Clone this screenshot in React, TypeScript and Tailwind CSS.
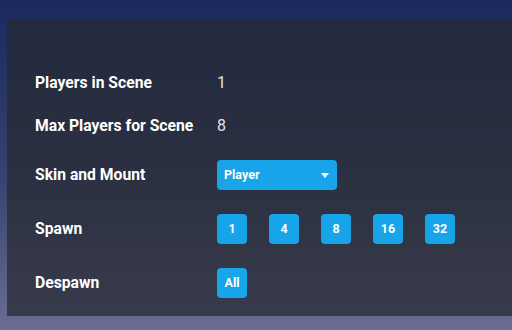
export default function App() {
  const spawn = ["1", "4", "8", "16", "32"];

  return (
    <div
      className="w-[512px] h-[330px] overflow-hidden bg-gradient-to-b from-[#1a2a60] via-[#34406e] to-[#6a6d92] pt-[20px] pl-[7px]"
      style={{ fontFamily: "Roboto, 'Noto Sans', sans-serif" }}
    >
      <div className="w-[520px] h-[296px] bg-[#272a31]/[0.72] pt-[68px] pl-[28px] flex flex-col">
        {/* text rows */}
        <div className="flex items-center h-[30px] -mt-[20px]">
          <div className="w-[182px] text-[15.7px] font-bold text-white">Players in Scene</div>
          <div className="text-[16px] text-[#e0e2e8]">1</div>
        </div>
        <div className="flex items-center h-[30px] mt-[13px]">
          <div className="w-[182px] text-[15.7px] font-bold text-white">Max Players for Scene</div>
          <div className="text-[16px] text-[#e0e2e8]">8</div>
        </div>

        {/* control rows */}
        <div className="flex items-center h-[30px] mt-[19px]">
          <div className="w-[182px] text-[15.7px] font-bold text-white">Skin and Mount</div>
          <button className="w-[120px] h-[30px] rounded-[4px] bg-[#18a4e8] flex items-center justify-between pl-[7px] pr-[8px] text-[12.5px] font-bold text-white">
            <span>Player</span>
            <svg width="8" height="5" viewBox="0 0 8 5">
              <path d="M0 0 H8 L4 5 Z" fill="#ffffff" />
            </svg>
          </button>
        </div>
        <div className="flex items-center h-[30px] mt-[24px]">
          <div className="w-[182px] text-[15.7px] font-bold text-white">Spawn</div>
          <div className="flex gap-[22px]">
            {spawn.map((n) => (
              <button
                key={n}
                className="w-[30px] h-[30px] rounded-[4px] bg-[#18a4e8] flex items-center justify-center text-[12.5px] font-bold text-white"
              >
                {n}
              </button>
            ))}
          </div>
        </div>
        <div className="flex items-center h-[30px] mt-[24px]">
          <div className="w-[182px] text-[15.7px] font-bold text-white">Despawn</div>
          <button className="w-[30px] h-[30px] rounded-[4px] bg-[#18a4e8] flex items-center justify-center text-[12.5px] font-bold text-white">
            All
          </button>
        </div>
      </div>
    </div>
  );
}
